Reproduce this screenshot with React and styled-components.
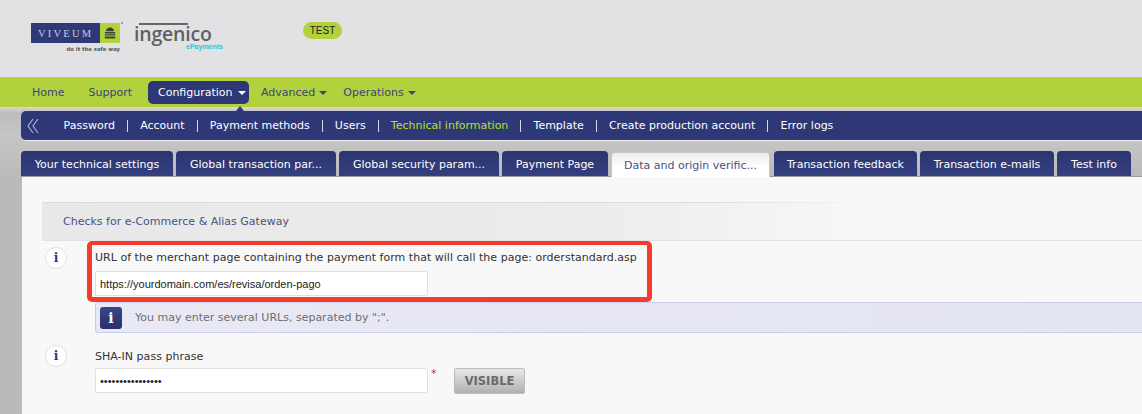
import styled, { createGlobalStyle } from "styled-components";

const Global = createGlobalStyle`
  html, body { margin: 0; padding: 0; }
  body {
    width: 1142px;
    height: 414px;
    overflow: hidden;
    font-family: "DejaVu Sans", Verdana, sans-serif;
    background: #bdbdbd;
  }
`;

const Page = styled.div`
  width: 1142px;
  height: 414px;
  overflow: hidden;
  display: flex;
  flex-direction: column;
`;

const Header = styled.header`
  height: 77px;
  flex: none;
  background: #e2e2e4;
  display: flex;
  align-items: flex-start;
  padding: 23px 0 0 31px;
  box-sizing: border-box;
`;
const ViveumLogo = styled.div`
  position: relative;
  width: 89px;
  display: flex;
  flex-direction: column;
  align-items: stretch;
`;
const ViveumBar = styled.div`
  height: 20px;
  background: #2e3a78;
  display: flex;
  justify-content: space-between;
  align-items: center;
  color: #c5cbdc;
  font-family: "Liberation Serif", serif;
  font-size: 10.5px;
  letter-spacing: 2.2px;
  padding-left: 7px;
`;
const ViveumMark = styled.span`
  width: 20px;
  height: 20px;
  background: #b1d23c;
  display: flex;
  align-items: center;
  justify-content: center;
`;
const Registered = styled.span`
  position: absolute;
  left: 90px;
  top: -1px;
  width: 2px;
  height: 2px;
  border-radius: 50%;
  background: #888;
`;
const ViveumTag = styled.div`
  font-size: 5.3px;
  font-weight: bold;
  color: #555;
  text-align: right;
  line-height: 8px;
  margin-top: 2px;
  white-space: nowrap;
`;
const IngenicoLogo = styled.div`
  margin-left: 14px;
  width: 90px;
  display: flex;
  flex-direction: column;
`;
const IngenicoBar = styled.span`
  width: 49px;
  height: 2px;
  background: #666;
  margin-left: 5px;
`;
const IngenicoName = styled.span`
  font-family: "Open Sans", sans-serif;
  font-size: 19.5px;
  font-weight: 600;
  line-height: 18px;
  letter-spacing: -0.2px;
  color: #5f6163;
`;
const IngenicoSub = styled.span`
  font-family: "Liberation Sans", sans-serif;
  font-size: 7px;
  font-weight: bold;
  line-height: 7px;
  color: #2fc4d8;
  text-align: right;
  padding-right: 1px;
`;
const TestBadge = styled.span`
  margin: -1px 0 0 79px;
  width: 39px;
  height: 17px;
  border-radius: 9px;
  background: #b1d23c;
  color: #222;
  font-family: "Liberation Sans", sans-serif;
  font-size: 10px;
  line-height: 17px;
  text-align: center;
`;

const MainNav = styled.nav`
  height: 30px;
  flex: none;
  background: #b1d23c;
  display: flex;
  align-items: center;
  padding: 0 0 0 32px;
  box-sizing: border-box;
  font-size: 11px;
  color: #3b4680;
`;
const MainItem = styled.span`
  display: flex;
  align-items: center;
  gap: 4px;
  margin-right: ${(p) => p.$gap}px;
`;
const Caret = styled.i`
  width: 0;
  height: 0;
  border-left: 4px solid transparent;
  border-right: 4px solid transparent;
  border-top: 4px solid ${(p) => p.$color};
  margin-top: 2px;
`;
const ActiveItem = styled.span`
  position: relative;
  height: 23px;
  width: 101px;
  box-sizing: border-box;
  padding-left: 10px;
  margin-right: 12px;
  display: flex;
  align-items: center;
  gap: 5px;
  background: #2e3876;
  color: #fff;
  border-radius: 5px;
  &::after {
    content: "";
    position: absolute;
    left: 88px;
    top: 25px;
    border-left: 4px solid transparent;
    border-right: 4px solid transparent;
    border-bottom: 5px solid #2e3876;
  }
`;

const Metal = styled.div`
  flex: 1;
  min-height: 0;
  padding: 4px 0 0 21px;
  background: linear-gradient(180deg, #d8d8d8 0, #bdbdbd 6px, #c6c6c6 30px, #bababa 70px);
  display: flex;
  flex-direction: column;
`;
const SubNav = styled.div`
  height: 30px;
  flex: none;
  box-sizing: border-box;
  padding-top: 1px;
  background: #2e3876;
  border-radius: 5px 0 0 5px;
  border-bottom: 1px solid #eee;
  display: flex;
  align-items: center;
  color: #fff;
  font-size: 11px;
`;
const BackIcon = styled.svg`
  width: 12px;
  height: 16px;
  margin: 0 12.5px 0 6px;
  flex: none;
`;
const SubItem = styled.span`
  color: ${(p) => (p.$active ? "#b4e02c" : "#fff")};
  padding: 0 12.1px;
  line-height: 12px;
  border-right: ${(p) => (p.$last ? "none" : "1px solid #d7dae6")};
  white-space: nowrap;
`;

const TabBar = styled.div`
  flex: none;
  display: flex;
  gap: 3px;
  margin-top: 10px;
  height: 25px;
  align-items: flex-end;
  border-bottom: 1px solid #999;
`;
const Tab = styled.span`
  width: ${(p) => p.$w}px;
  height: 25px;
  box-sizing: border-box;
  padding-top: 1px;
  border-radius: 4px 4px 0 0;
  display: flex;
  align-items: center;
  justify-content: center;
  font-size: 11px;
  white-space: nowrap;
  color: ${(p) => (p.$active ? "#4a5280" : "#fff")};
  background: ${(p) =>
    p.$active
      ? "linear-gradient(180deg, #ececec, #ffffff 60%)"
      : "linear-gradient(180deg, #2b3570, #343f7e)"};
  ${(p) => p.$active && "border: 1px solid #c8c8c8; border-bottom: none; margin: 0 1px -1px 0; width: 159px;"}
`;

const Content = styled.main`
  flex: 1;
  min-height: 0;
  margin-left: 1px;
  background: #f8f8f8;
  padding-top: 25px;
  position: relative;
`;
const SectionTitle = styled.div`
  margin-left: 20px;
  height: 38px;
  box-sizing: border-box;
  border-top: 1px solid;
  border-image: linear-gradient(90deg, #dcdcdc, #dcdcdc 60%, transparent 75%) 1;
  background: linear-gradient(90deg, #e8e8e8, #ececec 50%, #f8f8f8 76%);
  padding-left: 21px;
  display: flex;
  align-items: center;
  font-size: 11px;
  color: #4a5280;
`;
const Row = styled.div`
  display: flex;
  margin-left: 23px;
  padding-top: ${(p) => p.$top}px;
`;
const Divider = styled.div`
  height: 1px;
  margin-left: 20px;
  background: #e2e2e2;
`;
const InfoDot = styled.span`
  width: 22px;
  height: 22px;
  flex: none;
  border-radius: 50%;
  background: #fff;
  border: 1px solid #e2e2e2;
  box-sizing: border-box;
  display: flex;
  align-items: center;
  justify-content: center;
  font-family: "DejaVu Serif", serif;
  font-weight: bold;
  font-size: 12px;
  color: #2e3876;
`;
const Field = styled.div`
  margin-left: 28px;
  padding-top: ${(p) => p.$top}px;
  display: flex;
  flex-direction: column;
`;
const Label = styled.label`
  font-size: 11px;
  line-height: 13px;
  color: #333;
  white-space: nowrap;
  letter-spacing: 0.02px;
`;
const InputRow = styled.div`
  display: flex;
  align-items: flex-start;
  margin-top: ${(p) => p.$top}px;
`;
const TextBox = styled.div`
  width: 333px;
  height: 25px;
  box-sizing: border-box;
  background: #fff;
  border: 1px solid #e0e0e0;
  border-radius: 2px;
  padding-left: 4px;
  font-family: "Liberation Sans", sans-serif;
  font-size: 11px;
  line-height: 24px;
  color: #222;
`;
const Required = styled.span`
  color: #e0245e;
  font-size: 11px;
  line-height: 11px;
  margin-left: 3px;
  width: 23px;
`;
const VisibleButton = styled.span`
  width: 71px;
  height: 26px;
  box-sizing: border-box;
  border: 1px solid #bbb;
  border-radius: 2px;
  background: linear-gradient(180deg, #e8e8e8, #b0b0b0);
  color: #6a6a6a;
  font-family: "DejaVu Sans", sans-serif;
  font-weight: bold;
  font-size: 11.5px;
  line-height: 24px;
  text-align: center;
`;
const Hint = styled.div`
  margin: 6px 0 0 73px;
  height: 31px;
  box-sizing: border-box;
  background: linear-gradient(90deg, #e9e9f5, #e4e5f2);
  border-top: 1px solid #c9cef0;
  border-bottom: 1px solid #c9cef0;
  border-left: 1px solid #c9cef0;
  border-radius: 3px 0 0 3px;
  display: flex;
  align-items: center;
  padding-left: 4px;
  font-size: 11px;
  color: #6e6e6e;
`;
const HintIcon = styled.span`
  width: 22px;
  height: 22px;
  flex: none;
  margin-right: 13px;
  background: linear-gradient(180deg, #3a4584, #27306a);
  border-radius: 3px;
  color: #fff;
  display: flex;
  align-items: center;
  justify-content: center;
  font-family: "DejaVu Serif", serif;
  font-weight: bold;
  font-size: 14px;
`;
const Highlight = styled.div`
  position: absolute;
  left: 65px;
  top: 64px;
  width: 565px;
  height: 61px;
  box-sizing: border-box;
  border: 5px solid #f53b2a;
  border-top-width: 4px;
  border-radius: 5px;
  pointer-events: none;
`;

const tabs = [
  { label: "Your technical settings", w: 152 },
  { label: "Global transaction par...", w: 160 },
  { label: "Global security param...", w: 160 },
  { label: "Payment Page", w: 106 },
  { label: "Data and origin verific...", w: 159, active: true },
  { label: "Transaction feedback", w: 143 },
  { label: "Transaction e-mails", w: 134 },
  { label: "Test info", w: 74 },
];

const subItems = [
  { label: "Password" },
  { label: "Account" },
  { label: "Payment methods" },
  { label: "Users" },
  { label: "Technical information", active: true },
  { label: "Template" },
  { label: "Create production account" },
  { label: "Error logs", last: true },
];

export default function App() {
  return (
    <Page>
      <Global />
      <Header>
        <ViveumLogo>
          <ViveumBar>
            VIVEUM
            <ViveumMark>
              <svg width="12" height="12" viewBox="0 0 12 12">
                <path
                  d="M2 4.2 C2 1.8 4 0.6 6 0.6 C8 0.6 10 1.8 10 4.2 Z M0.8 5 H11.2 V6.4 H0.8 Z M0.8 7.2 H11.2 V8.6 H0.8 Z M0.8 9.4 H11.2 V11.4 H0.8 Z"
                  fill="#3a4430"
                />
              </svg>
            </ViveumMark>
          </ViveumBar>
          <Registered />
          <ViveumTag>do it the safe way</ViveumTag>
        </ViveumLogo>
        <IngenicoLogo>
          <IngenicoBar />
          <IngenicoName>ingenico</IngenicoName>
          <IngenicoSub>ePayments</IngenicoSub>
        </IngenicoLogo>
        <TestBadge>TEST</TestBadge>
      </Header>
      <MainNav>
        <MainItem $gap={24}>Home</MainItem>
        <MainItem $gap={16}>Support</MainItem>
        <ActiveItem>
          Configuration <Caret $color="#fff" />
        </ActiveItem>
        <MainItem $gap={16}>
          Advanced <Caret $color="#3b4680" />
        </MainItem>
        <MainItem $gap={0}>
          Operations <Caret $color="#3b4680" />
        </MainItem>
      </MainNav>
      <Metal>
        <SubNav>
          <BackIcon viewBox="0 0 12 16" fill="none" stroke="#a9aec9" strokeWidth="1.2">
            <path d="M6 1 L1 8 L6 15 M11 1 L6 8 L11 15" />
          </BackIcon>
          {subItems.map((s) => (
            <SubItem key={s.label} $active={s.active} $last={s.last}>
              {s.label}
            </SubItem>
          ))}
        </SubNav>
        <TabBar>
          {tabs.map((t) => (
            <Tab key={t.label} $w={t.w} $active={t.active}>
              {t.label}
            </Tab>
          ))}
        </TabBar>
        <Content>
          <SectionTitle>Checks for e-Commerce &amp; Alias Gateway</SectionTitle>
          <Divider />
          <Row $top={6}>
            <InfoDot>i</InfoDot>
            <Field $top={4}>
              <Label>URL of the merchant page containing the payment form that will call the page: orderstandard.asp</Label>
              <InputRow $top={7}>
                <TextBox>https://yourdomain.com/es/revisa/orden-pago</TextBox>
              </InputRow>
            </Field>
          </Row>
          <Hint>
            <HintIcon>i</HintIcon>
            You may enter several URLs, separated by ";".
          </Hint>
          <Row $top={12}>
            <InfoDot>i</InfoDot>
            <Field $top={5}>
              <Label>SHA-IN pass phrase</Label>
              <InputRow $top={5}>
                <TextBox>••••••••••••••••</TextBox>
                <Required>*</Required>
                <VisibleButton>VISIBLE</VisibleButton>
              </InputRow>
            </Field>
          </Row>
          <Highlight />
        </Content>
      </Metal>
    </Page>
  );
}
